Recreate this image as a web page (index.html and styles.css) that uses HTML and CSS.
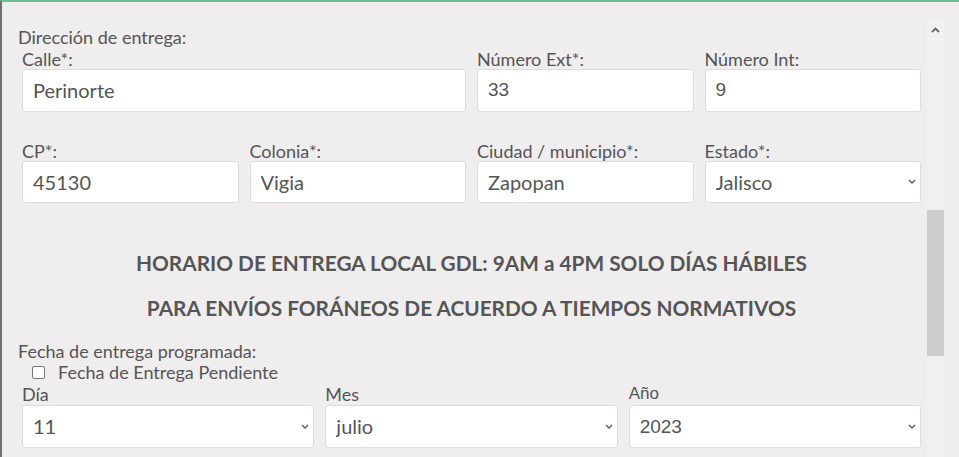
FILE: index.html
```
<!DOCTYPE html>
<html lang="es">
<head>
<meta charset="utf-8">
<title>Dirección de entrega</title>
<link rel="stylesheet" href="styles.css">
</head>
<body>
<div class="panel">
  <div class="content">
    <div class="section-title">Dirección de entrega:</div>
    <div class="grid4 first-row">
      <div class="field span2">
        <label class="lbl">Calle*:</label>
        <input class="control" type="text" value="Perinorte">
      </div>
      <div class="field">
        <label class="lbl">Número Ext*:</label>
        <input class="control num" type="text" value="33">
      </div>
      <div class="field">
        <label class="lbl">Número Int:</label>
        <input class="control num" type="text" value="9">
      </div>
    </div>
    <div class="grid4 row-gap">
      <div class="field">
        <label class="lbl">CP*:</label>
        <input class="control" type="text" value="45130">
      </div>
      <div class="field">
        <label class="lbl">Colonia*:</label>
        <input class="control" type="text" value="Vigia">
      </div>
      <div class="field">
        <label class="lbl">Ciudad / municipio*:</label>
        <input class="control" type="text" value="Zapopan">
      </div>
      <div class="field">
        <label class="lbl">Estado*:</label>
        <div class="select-wrap">
          <select class="control"><option>Jalisco</option></select>
          <svg class="chev" width="8" height="5" viewBox="0 0 8 5"><path d="M1 1 L4 4 L7 1" fill="none" stroke="#555" stroke-width="1.3"/></svg>
        </div>
      </div>
    </div>
    <div class="notice">
      <p>HORARIO DE ENTREGA LOCAL GDL: 9AM a 4PM SOLO DÍAS HÁBILES</p>
      <p>PARA ENVÍOS FORÁNEOS DE ACUERDO A TIEMPOS NORMATIVOS</p>
    </div>
    <div class="section-title">Fecha de entrega programada:</div>
    <label class="check"><input type="checkbox" class="box"><span>Fecha de Entrega Pendiente</span></label>
    <div class="grid3">
      <div class="field">
        <label class="lbl">Día</label>
        <div class="select-wrap">
          <select class="control"><option>11</option></select>
          <svg class="chev" width="8" height="5" viewBox="0 0 8 5"><path d="M1 1 L4 4 L7 1" fill="none" stroke="#555" stroke-width="1.3"/></svg>
        </div>
      </div>
      <div class="field">
        <label class="lbl">Mes</label>
        <div class="select-wrap">
          <select class="control"><option>julio</option></select>
          <svg class="chev" width="8" height="5" viewBox="0 0 8 5"><path d="M1 1 L4 4 L7 1" fill="none" stroke="#555" stroke-width="1.3"/></svg>
        </div>
      </div>
      <div class="field">
        <label class="lbl alt">Año</label>
        <div class="select-wrap">
          <select class="control num"><option>2023</option></select>
          <svg class="chev" width="8" height="5" viewBox="0 0 8 5"><path d="M1 1 L4 4 L7 1" fill="none" stroke="#555" stroke-width="1.3"/></svg>
        </div>
      </div>
    </div>
  </div>
  <div class="scrollbar">
    <svg class="arrow" width="9" height="6" viewBox="0 0 9 6"><path d="M1 5 L4.5 1.5 L8 5" fill="none" stroke="#666" stroke-width="1.8"/></svg>
    <div class="thumb"></div>
  </div>
</div>
</body>
</html>
```
FILE: styles.css
```
html, body {
  margin: 0;
  padding: 0;
}
body {
  background: #efedee;
  font-family: Lato, "Open Sans", sans-serif;
  color: #555;
}
.panel {
  display: flex;
  height: 457px;
  box-sizing: border-box;
  border-top: 2px solid #67c190;
  border-left: 2px solid #707070;
  overflow: hidden;
}
.content {
  width: 899px;
  flex: none;
  padding: 25px 0 0 20px;
}
.section-title {
  margin-left: -4px;
  font-size: 18px;
  line-height: 20px;
}
.first-row {
  margin-top: 2px;
}
.grid4 {
  display: grid;
  grid-template-columns: repeat(4, 1fr);
  column-gap: 11px;
}
.grid3 {
  display: grid;
  grid-template-columns: repeat(3, 1fr);
  column-gap: 11px;
  margin-top: 2px;
}
.grid3 .lbl {
  margin-bottom: 1px;
}
.row-gap {
  margin-top: 29px;
}
.span2 {
  grid-column: span 2;
}
.field {
  display: flex;
  flex-direction: column;
  min-width: 0;
}
.lbl {
  font-size: 18px;
  line-height: 20px;
}
.lbl.alt {
  font-family: "Liberation Sans", Arial, sans-serif;
  font-size: 17px;
}
.control {
  display: block;
  box-sizing: border-box;
  width: 100%;
  height: 42.5px;
  margin: 0;
  padding: 0 6px 0 10px;
  border: 1px solid #dcdcdc;
  border-radius: 3px;
  background-color: #fff;
  font-family: Lato, "Open Sans", sans-serif;
  font-size: 20px;
  color: #555;
  outline: none;
}
.control.num {
  font-family: "Liberation Sans", Arial, sans-serif;
  font-size: 19px;
}
select.control {
  appearance: none;
  -webkit-appearance: none;
  padding-left: 10px;
  padding-right: 20px;
}
.select-wrap {
  position: relative;
}
.chev {
  position: absolute;
  right: 5px;
  top: 50%;
  margin-top: -2.5px;
  display: block;
}
.notice {
  padding: 48px 0 21px;
  text-align: center;
  font-weight: 700;
  font-size: 20.8px;
}
.notice p {
  margin: 0;
  line-height: 24px;
}
.notice p + p {
  margin-top: 21px;
}
.check {
  display: flex;
  align-items: center;
  height: 20px;
  margin: 1px 0 0 10px;
  font-size: 18px;
  line-height: 20px;
}
.box {
  appearance: none;
  -webkit-appearance: none;
  width: 13px;
  height: 13px;
  margin: 0 13px 0 0;
  box-sizing: border-box;
  border: 1px solid #767676;
  border-radius: 2px;
  background: #fff;
}
.scrollbar {
  width: 17px;
  flex: none;
  margin-left: 6px;
  margin-top: 18px;
  padding-top: 7px;
  display: flex;
  flex-direction: column;
  align-items: center;
  background: #f1f0f0;
}
.arrow {
  display: block;
}
.thumb {
  width: 17px;
  height: 146px;
  margin-top: 177px;
  background: #cdcdcd;
}
```
